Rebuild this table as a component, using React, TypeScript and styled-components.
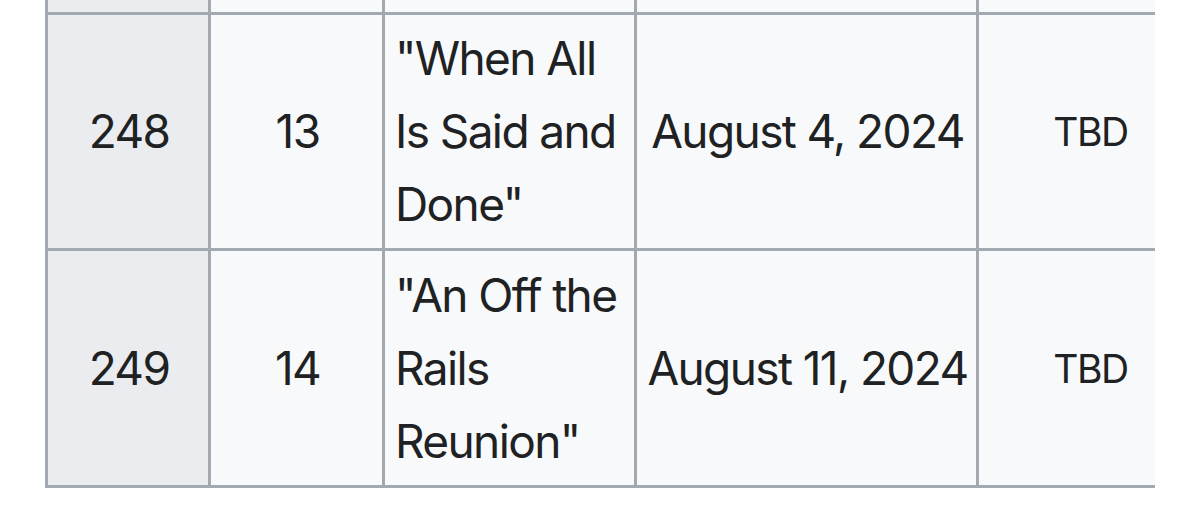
import React from 'react';
import styled, { createGlobalStyle } from 'styled-components';

const GlobalStyle = createGlobalStyle`
  html, body {
    margin: 0;
    padding: 0;
    background: #ffffff;
  }
  body {
    font-family: Inter, "Noto Sans", "Liberation Sans", sans-serif;
    color: #202122;
  }
`;

const Page = styled.div`
  width: 1200px;
  height: 517px;
  padding-left: 45px;
  box-sizing: border-box;
  overflow: hidden;
`;

const Scroller = styled.div`
  width: 1110px;
  overflow: hidden;
`;

const Table = styled.table`
  border-collapse: separate;
  border-spacing: 0;
  table-layout: fixed;
  width: 1155px;
  border-left: 3px solid #a2a9b1;
  background: #f8f9fa;
`;

const Cell = styled.td<{ $w: number; $header?: boolean; $align?: string; $small?: boolean; $nowrap?: boolean }>`
  box-sizing: border-box;
  width: ${({ $w }) => $w}px;
  padding: 7px 8px 7px 10px;
  border-right: 3px solid #a2a9b1;
  border-bottom: 3px solid #a2a9b1;
  background: ${({ $header }) => ($header ? '#eaecf0' : '#f8f9fa')};
  text-align: ${({ $align }) => $align || 'center'};
  vertical-align: middle;
  white-space: ${({ $nowrap }) => ($nowrap ? 'nowrap' : 'normal')};
  font-size: ${({ $small }) => ($small ? '39px' : '46px')};
  letter-spacing: -0.035em;
  line-height: 73px;
  color: #202122;
`;

const StubRow = styled.tr`
  td {
    height: 15px;
    padding: 0;
  }
`;

const EpisodeRow = styled.tr<{ $h: number }>`
  td {
    height: ${({ $h }) => $h}px;
  }
`;

const widths = [163, 174, 252, 342, 224];

const episodes = [
  { overall: '248', season: '13', title: '"When All Is Said and Done"', date: 'August 4, 2024', viewers: 'TBD', h: 236 },
  { overall: '249', season: '14', title: '"An Off the Rails Reunion"', date: 'August 11, 2024', viewers: 'TBD', h: 237 },
];

const App: React.FC = () => {
  return (
    <>
      <GlobalStyle />
      <Page>
        <Scroller>
          <Table>
            <tbody>
              <StubRow>
                <Cell $w={widths[0]} $header />
                <Cell $w={widths[1]} />
                <Cell $w={widths[2]} />
                <Cell $w={widths[3]} />
                <Cell $w={widths[4]} />
              </StubRow>
              {episodes.map((ep) => (
                <EpisodeRow key={ep.overall} $h={ep.h}>
                  <Cell $w={widths[0]} $header>{ep.overall}</Cell>
                  <Cell $w={widths[1]}>{ep.season}</Cell>
                  <Cell $w={widths[2]} $align="left">{ep.title}</Cell>
                  <Cell $w={widths[3]} $nowrap>{ep.date}</Cell>
                  <Cell $w={widths[4]} $small>{ep.viewers}</Cell>
                </EpisodeRow>
              ))}
            </tbody>
          </Table>
        </Scroller>
      </Page>
    </>
  );
};

export default App;
